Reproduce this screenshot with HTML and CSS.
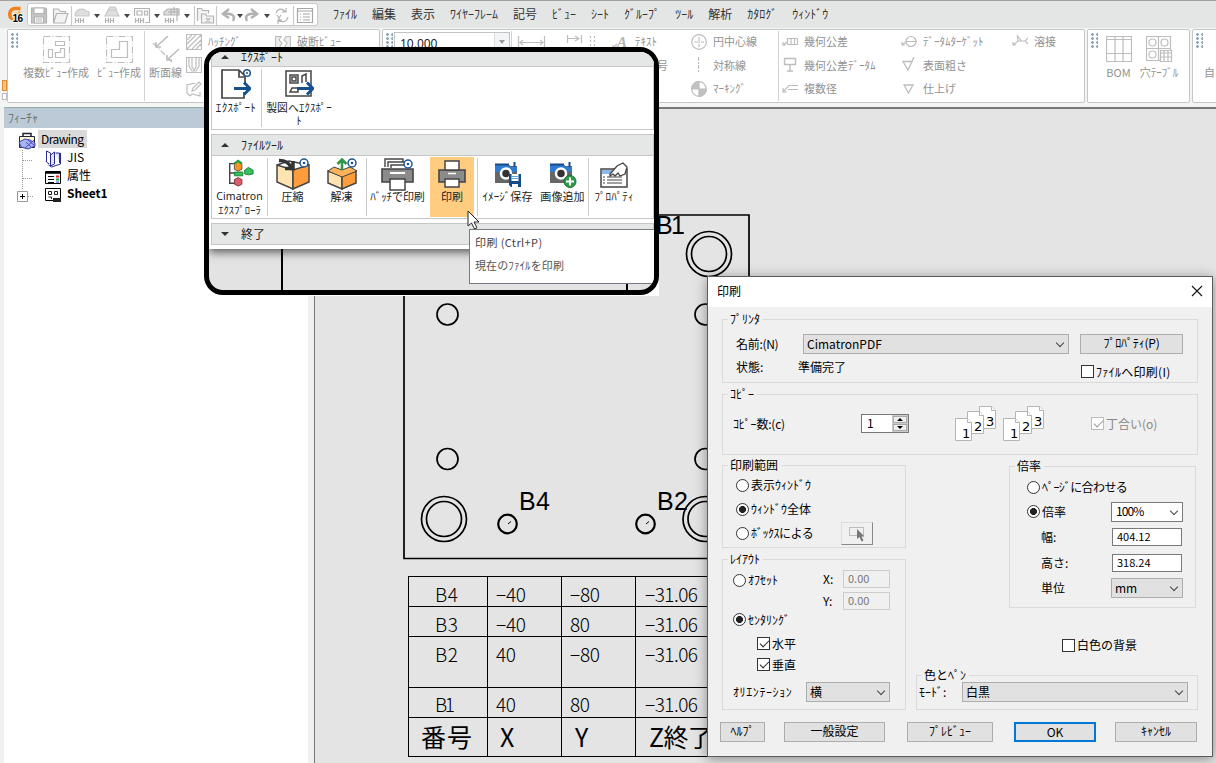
FILE: index.html
```html
<!DOCTYPE html>
<html lang="ja">
<head>
<meta charset="utf-8">
<title>Cimatron</title>
<link rel="stylesheet" href="styles.css">
</head>
<body>
<div class="app">
  <header class="menubar">
    <svg class="logo" width="19" height="20" viewBox="0 0 19 20"><path d="M14.500 3.500H9a5.500 5.500 0 0 0-2 10.500" fill="none" stroke="#f0821e" stroke-width="3.600"/><path d="M8 8.500h5.500V6" fill="none" stroke="#fbb040" stroke-width="2"/><text x="6.500" y="17" class="logo-num">16</text></svg>
    <div class="quick">
      <svg width="290" height="22" viewBox="28 4 290 22" fill="none" stroke="#b2b2b2" stroke-width="1.200">
        <path d="M31.500 8h14l1 1v14h-15z" fill="#c4c4c4"/><path d="M34 8v5.500h10V8zM34.500 23v-6h9v6z" fill="#fff"/><path d="M36 19h6m-6 2h6"/>
        <path d="M53.500 23V9h5l2 2.500h5v2M53.500 23l3-9.500h11.500l-3 9.500z" fill="#f2f2f2"/>
        <path d="M75 16c0-8 9-8 11-5l3 1v4zM105 16l3-6h8l3 6zM108 10l2-3h5l2 3" fill="#dedede" stroke="#c8c8c8"/>
        <path d="M75.500 18v5m3-5v5m-3-2.500h3m2-2.500v5m3-5v5m-3-2.500h3M105.500 18v5m3-5v5m-3-2.500h3m2-2.500v5m3-5v5m-3-2.500h3M135.500 18v5m3-5v5m-3-2.500h3m2-2.500v5m3-5v5m-3-2.500h3M165.500 18v5m3-5v5m-3-2.500h3m2-2.500v5m3-5v5m-3-2.500h3"/>
        <path d="M134.500 16V8.500h15v14h-4M137 11h5v4h-5zM144.500 11h3v4h-3z"/>
        <path d="M164 15v-3l4-3h11v6zM168 12h11M174 7v6M177 8v13M171 9v6" fill="#dedede"/>
        <path d="M197.500 21V8.500h4l1 2h6v3M201.500 23v-9h4l1 2h7v7zM206 18l4 4m0-4l-4 4" fill="#f3f3f3"/>
        <path d="M233 21c3-6-2-8-9-7m5-5-6 5 6 4M247 21c-3-6 2-8 9-7m-5-5 6 5-6 4" stroke-width="2.500"/>
        <path d="M276 13c2-5 7-5 9-1m1-4v4h-4M288 17c-1 5-6 6-9 3m-1 4v-4h4M277 15l2 3 2-3m-2 3v4" />
        <path d="M297.500 8.500h15v14h-15zM297.500 11h15M300 14h1m2 0h7m-10 3h1m2 0h7m-10 3h1m2 0h7" stroke="#a6a6a6"/>
        <path d="M71.500 6v19M194.500 6v19M216.500 6v19M293.500 6v19" stroke="#cacaca"/>
        <path d="M94 14h6l-3 4zM124 14h6l-3 4zM154 14h6l-3 4zM184 14h6l-3 4zM237 14h6l-3 4zM264 14h6l-3 4z" fill="#444" stroke="none"/>
      </svg>
    </div>
    <nav class="menus"><span>ﾌｧｲﾙ</span><span>編集</span><span>表示</span><span>ﾜｲﾔｰﾌﾚｰﾑ</span><span>記号</span><span>ﾋﾞｭｰ</span><span>ｼｰﾄ</span><span>ｸﾞﾙｰﾌﾟ</span><span>ﾂｰﾙ</span><span>解析</span><span>ｶﾀﾛｸﾞ</span><span>ｳｨﾝﾄﾞｳ</span></nav>
  </header>

  <section class="ribbon">
    <div class="ribbon-tabs"><i class="tab on"></i><i class="tab"></i></div>
    <div class="rpanel views">
      <i class="grip"></i>
      <div class="big w-multi"><svg width="27" height="27" viewBox="0 0 27 27" class="ln"><path d="M.5.500h26v26H.5z" stroke-dasharray="7 2 1 2"/><path d="M12.500 5.500h9v4h-9zM5.500 13.500h4v8h-4zM17.500 12.500h4v9h-9v-5h5z"/></svg><span>複数ﾋﾞｭｰ作成</span></div>
      <div class="big w-view"><svg width="27" height="27" viewBox="0 0 27 27" class="ln"><path d="M.5.500h26v26H.5z" stroke-dasharray="7 2 1 2"/><path d="M13.500 5.500h8v16h-16v-8h8z"/></svg><span>ﾋﾞｭｰ作成</span></div>
      <i class="vsep"></i>
      <div class="big w-section"><svg width="28" height="27" viewBox="0 0 28 27" class="ln"><path d="M1 7l19 19" stroke-dasharray="6 2 1 2"/><path d="M16 0L4 11m0-5v5h5M27 13L15 24m0-5v5h5" stroke-width="1.600"/></svg><span>断面線</span></div>
      <div class="cmds w-hatch">
        <div class="cmd"><svg width="16" height="16" viewBox="0 0 16 16" class="ln"><path d="M.5.500h15v15H.5zM1 6l5-5M1 10L10 1M1 15L15 1M6 15l9-9M10 15l5-5"/></svg><span>ﾊｯﾁﾝｸﾞ</span></div>
        <div class="cmd"><svg width="16" height="16" viewBox="0 0 16 16" class="ln"><path d="M.5.500h15v15H.5zM3 1v8l3 5h4l3-5V1M6 1v9l2 3 2-3V1"/></svg></div>
        <div class="cmd"><svg width="16" height="16" viewBox="0 0 16 16" class="ln"><path d="M9 2L1 4v8l3 3 2-2 8 2v-4M6 10l1-3 6-6 2 2-6 6z"/></svg></div>
      </div>
      <div class="cmds"><div class="cmd"><svg width="16" height="16" viewBox="0 0 16 16" class="ln"><path d="M.5 2.500H6L4 6l3 3-3 5.500H.5zM15.500 2.500H11L9 6l3 3-3 5.500h6.500z" fill="#eee"/></svg><span>破断ﾋﾞｭｰ</span></div></div>
    </div>

    <div class="rpanel notes">
      <i class="grip"></i>
      <div class="scale"><span>10.000</span><i class="dd"></i></div>
      <i class="vsep"></i>
      <div class="cmds w-dims"><div class="cmd"><svg width="80" height="18" viewBox="517 32 80 18" class="ln"><path d="M518.500 35v13M544.500 35v13M520 41.500h23M523 39l-3 2.500 3 2.500M540 39l3 2.500-3 2.500M567.500 34v8M568 37.500h10M575 35l4 2.500-4 2.500M581.500 34v8"/><path d="M590.500 35v14M594.500 35v14" stroke-dasharray="2 2"/></svg></div></div>
      <div class="cmds w-text">
        <div class="cmd"><svg width="18" height="16" viewBox="0 0 18 16" class="ln"><text x="5" y="13" class="glyph-a">A</text><path d="M5 10l-4 4m0-3v3h3"/></svg><span>ﾃｷｽﾄ</span></div>
        <div class="cmd tail"><span>記号</span></div>
      </div>
      <div class="cmds w-center">
        <div class="cmd"><svg width="16" height="16" viewBox="0 0 16 16" class="ln"><circle cx="8" cy="8" r="7.300"/><path d="M8 3v10M3 8h10" stroke-dasharray="4 1 1 1"/></svg><span>円中心線</span></div>
        <div class="cmd"><svg width="16" height="16" viewBox="0 0 16 16" class="ln"><path d="M7.500 0v16" stroke-dasharray="4 1 2 1"/></svg><span>対称線</span></div>
        <div class="cmd"><svg width="16" height="16" viewBox="0 0 16 16" class="ln"><circle cx="8" cy="8" r="7.300"/><path d="M8 8V.7A7.300 7.300 0 0 0 .7 8zM8 8v7.300A7.300 7.300 0 0 0 15.300 8z" fill="#c2c2c2"/></svg><span>ﾏｰｷﾝｸﾞ</span></div>
      </div>
      <i class="vsep"></i>
      <div class="cmds w-tol">
        <div class="cmd"><svg width="16" height="16" viewBox="0 0 16 16" class="ln"><path d="M5.500 4.500h10v6h-10zM9 5v5M12.500 5v5M5 8l-4 3m0-3v3h3"/></svg><span>幾何公差</span></div>
        <div class="cmd"><svg width="16" height="16" viewBox="0 0 16 16" class="ln"><path d="M2.500 1.500h11v6h-11zM8 8v6M5 14h6" stroke-width="1.400"/></svg><span>幾何公差ﾃﾞｰﾀﾑ</span></div>
        <div class="cmd"><svg width="16" height="16" viewBox="0 0 16 16" class="ln"><path d="M16 4.500H7L1 11m0-4v4h4M16 8.500H6"/></svg><span>複数径</span></div>
      </div>
      <div class="cmds w-surf">
        <div class="cmd"><svg width="16" height="16" viewBox="0 0 16 16" class="ln"><circle cx="10" cy="7.500" r="5"/><path d="M5 7.500h11M5 8l-4 3m0-3v3h3"/></svg><span>ﾃﾞｰﾀﾑﾀｰｹﾞｯﾄ</span></div>
        <div class="cmd"><svg width="16" height="16" viewBox="0 0 16 16" class="ln"><path d="M2 4.500h9L7 13zM7 13l6-13" stroke-width="1.300"/></svg><span>表面粗さ</span></div>
        <div class="cmd"><svg width="16" height="16" viewBox="0 0 16 16" class="ln"><path d="M3 4h9l-4.500 8z" stroke-width="1.300"/></svg><span>仕上げ</span></div>
      </div>
      <div class="cmds"><div class="cmd"><svg width="16" height="16" viewBox="0 0 16 16" class="ln"><path d="M1 11l5-4h7M6 7l-.5-5 4 5M16 4l-3 3 3 3M1 8v3h3"/></svg><span>溶接</span></div></div>
    </div>

    <div class="rpanel tables">
      <i class="grip"></i>
      <div class="big w-bom"><svg width="26" height="27" viewBox="0 0 26 27" class="ln"><path d="M.5.500h25v25H.5zM.5 3.500h25M9 1v25M17 1v25M1 17.500h25"/></svg><span>BOM</span></div>
      <div class="big w-hole"><svg width="27" height="27" viewBox="0 0 27 27" class="ln"><path d="M.5.500h24v24H.5zM12.500 1v24M1 12.500h24"/><circle cx="6.500" cy="6.500" r="3.500"/><circle cx="18.500" cy="6.500" r="3.500"/><circle cx="6.500" cy="18.500" r="3.500"/><path d="M14.500 14.500h11v11h-11zM14.500 17h11M18 15v11M22 15v11M15 21h11" fill="#fff"/></svg><span>穴ﾃｰﾌﾞﾙ</span></div>
    </div>
    <div class="rpanel auto"><i class="grip"></i><div class="big w-auto"><svg width="11" height="27"></svg><span>自</span></div></div>
  </section>

  <main class="work">
    <aside class="features">
      <h2>ﾌｨｰﾁｬ</h2>
      <div class="tree">
        <svg width="46" height="80" viewBox="15 130 46 80" class="tree-art">
          <path d="M22.500 149v40M23 159.500h10M23 177.500h10M28 195.500h6" fill="none" stroke="#999" stroke-dasharray="1 1"/>
          <path d="M17.500 190.500h10v10h-10z" fill="#fff" stroke="#999"/><path d="M20 195.500h5M22.500 193v5" stroke="#000"/>
          <path d="M19.500 135.500h15v11h-15z" fill="#fff9dc" stroke="#223"/><path d="M23 135v-2.500h8v2.500" fill="none" stroke="#223" stroke-width="1.500"/><path d="M19 141l6-3 5 1 5 3v3l-7 3-7-2z" fill="#a5b4f2" stroke="#3940a8"/><path d="M28 139l7 6m-9-4 6 6m2-8-9 8" stroke="#5a3fc0"/>
          <path d="M46.500 150l4 2v12l-4-3z" fill="#fff" stroke="#2a2a90"/><path d="M60.500 152v11l-9 3-3-2" fill="#fff" stroke="#2a2a90"/><path d="M50.500 154l4-3v12l-4 2zM55.500 152h4v10" fill="#dfe3fa" stroke="#2a2a90"/>
          <path d="M45.500 170.500h15v12h-15z" fill="#fff" stroke="#000"/><path d="M46 171.500h14" stroke="#000" stroke-width="2.500"/><path d="M48 175.500h6m-6 3h6m-6 3h6" stroke="#000"/><path d="M56 175.500h3" stroke="#e02020" stroke-width="2"/><path d="M56 178.500h3" stroke="#20a040" stroke-width="2"/><path d="M56 181h3" stroke="#2040d0"/>
          <path d="M45.500 187.500h15v12h-15z" fill="#fff" stroke="#000"/><path d="M48.500 190.500h3v3h-3zM54.500 190.500h3v3h-3zM48.500 196h3v2" fill="none" stroke="#222"/><path d="M53 197h8v4h-8z" fill="#222"/>
        </svg>
        <ul><li class="root"><span>Drawing</span></li><li>JIS</li><li>属性</li><li class="bold">Sheet1</li></ul>
      </div>
    </aside>
    <svg class="canvas" width="901" height="654" viewBox="315 109 901 654">
      <g class="draft">
        <path d="M404 215H749V558.500H404z"/>
        <circle cx="447.500" cy="314.500" r="10.500"/><circle cx="447.500" cy="459" r="10.500"/>
        <circle cx="705.500" cy="314.500" r="10.500"/><circle cx="705.500" cy="459" r="10.500"/>
        <circle cx="444" cy="519" r="22.500"/><circle cx="444" cy="519" r="17.500"/>
        <circle cx="705.500" cy="519" r="22.500"/><circle cx="705.500" cy="519" r="17.500"/>
        <circle cx="709" cy="254" r="22.500"/><circle cx="709" cy="254" r="17.500"/>
      </g>
      <g class="draft pins"><circle cx="507.500" cy="524" r="9.300"/><circle cx="645.500" cy="524" r="9.300"/></g>
      <path d="M508 524l3-2.500M646 524l3-2.500" stroke="#000"/>
      <g class="pin"><text x="519" y="510" textLength="31">B4</text><text x="657" y="510" textLength="31">B2</text><text x="656" y="234" textLength="29">B1</text></g>
      <path d="M408.500 576V757M487.500 576V757M561.500 576V757M635.500 576V757M408 576.500H1100M408 606.500H1100M408 636.500H1100M408 687.500H1100M408 717.500H1100M408 756.500H1100" stroke="#000"/>
      <g class="cells">
        <text x="435" y="601" textLength="23">B4</text><text x="496" y="601" textLength="30">−40</text><text x="570" y="601" textLength="30">−80</text><text x="645" y="601" textLength="53">−31.06</text>
        <text x="435" y="631" textLength="23">B3</text><text x="496" y="631" textLength="30">−40</text><text x="570" y="631" textLength="20">80</text><text x="645" y="631" textLength="53">−31.06</text>
        <text x="435" y="661" textLength="23">B2</text><text x="496" y="661" textLength="20">40</text><text x="570" y="661" textLength="30">−80</text><text x="645" y="661" textLength="53">−31.06</text>
        <text x="435" y="711" textLength="20">B1</text><text x="496" y="711" textLength="20">40</text><text x="570" y="711" textLength="20">80</text><text x="645" y="711" textLength="53">−31.06</text>
      </g>
      <g class="heads"><text x="421" y="747" textLength="51">番号</text><text x="500" y="747">X</text><text x="575" y="747">Y</text><text x="649" y="747" textLength="64">Z終了</text></g>
    </svg>
  </main>

  <div class="callout-back"></div>
  <div class="callout">
    <div class="filemenu">
      <h3 class="cut"><i class="up"></i>ｴｸｽﾎﾟｰﾄ</h3>
      <div class="tools first">
        <div class="tool t-exp"><svg width="30" height="30" viewBox="0 0 30 30"><path d="M18 1H1v28h22v-6M18 1l6 6v9M18 1v7h5" fill="none" stroke="#444" stroke-width="1.700"/><circle cx="26" cy="4" r="3.300" class="gear"/><circle cx="26" cy="4" r="1" fill="#1c5592"/><path d="M13 19.500h15M23 13.500l6 6-6 6" class="arrow"/></svg><span>ｴｸｽﾎﾟｰﾄ</span></div>
        <i class="tsep"></i>
        <div class="tool t-draft"><svg width="30" height="30" viewBox="0 0 30 30"><path d="M2 2h25v25H2zM6 6h8v8H6zM8 8h4v4H8zM18 14V7l4-2v8M6 23l2-4h6v4z" fill="none" stroke="#444" stroke-width="1.500"/><path d="M13 19.500h15M23 13.500l6 6-6 6" class="arrow"/></svg><span>製図へｴｸｽﾎﾟｰ</span><span>ﾄ</span></div>
      </div>
      <h3><i class="up"></i>ﾌｧｲﾙﾂｰﾙ</h3>
      <div class="tools">
        <div class="tool t-cima"><svg width="28" height="28" viewBox="2 1 30 30"><path d="M12 6H6v21h6M6 16h8" fill="none" stroke="#444" stroke-width="1.500"/><path d="M11 7l4-4 4 3v6l-4 2-4-2z" fill="#f7941d" stroke="#555"/><path d="M11 6l4-3 4 3" stroke="#22a045" stroke-width="2.500" fill="none"/><path d="M11 15h9v4h-9z" fill="#35c15a" stroke="#177c32"/><path d="M11 23l4-2 4 2v5l-4 2-4-2z" fill="#d95f6b" stroke="#7c3038"/><path d="M22 13l4-3 5 3v4l-5 1-4-1z" fill="#35c15a" stroke="#177c32"/></svg><span class="latin">Cimatron</span><span>ｴｸｽﾌﾟﾛｰﾗ</span></div>
        <i class="tsep"></i>
        <div class="tool t-box"><svg width="34" height="32" viewBox="0 0 34 32"><path d="M1 7l16 5v19L1 24z" class="boxl"/><path d="M33 7l-16 5v19l16-7z" class="boxr"/><path d="M1 7l12-4 20 4" fill="none" stroke="#444" stroke-width="1.500"/><path d="M3 2.500c7 0 10 2 12 7M9 10.500h8V3" stroke="#333" stroke-width="3.500" fill="none"/><circle cx="28" cy="5" r="4" class="gear"/><circle cx="28" cy="5" r="1.300" fill="#1c5592"/></svg><span>圧縮</span></div>
        <div class="tool t-box"><svg width="32" height="32" viewBox="0 0 32 32"><path d="M2 13l14 5v13L2 25z" class="boxl"/><path d="M30 13l-14 5v13l14-6z" class="boxr"/><path d="M2 13l6-4 8 3 8-3 7 4-15 6z" fill="#ffb45c" stroke="#444"/><path d="M16 12V2M11.500 6L16 1.500 20.500 6" fill="none" stroke="#31964b" stroke-width="2.600"/><circle cx="26" cy="5" r="4" class="gear"/><circle cx="26" cy="5" r="1.300" fill="#1c5592"/></svg><span>解凍</span></div>
        <i class="tsep"></i>
        <div class="tool t-batch"><svg width="33" height="33" viewBox="0 0 33 33"><path d="M4 9V1h18v3M7 9V4h18v3M10 10V7h17" fill="#fff" stroke="#444" stroke-width="1.400"/><path d="M1 11h31v13H1z" fill="#8b8b8b" stroke="#444" stroke-width="1.600"/><path d="M9 15h15" stroke="#fff" stroke-width="2"/><path d="M9 21h15v11H9z" fill="#fff" stroke="#444" stroke-width="1.500"/><circle cx="27" cy="6" r="4" class="gear"/><circle cx="27" cy="6" r="1.300" fill="#1c5592"/></svg><span>ﾊﾞｯﾁで印刷</span></div>
        <div class="tool t-print"><svg width="28" height="28" viewBox="0 0 28 28"><path d="M1 10h26v12H1z" fill="#8b8b8b" stroke="#444" stroke-width="1.600"/><path d="M7 1h14v9H7zM7 19h14v8H7z" fill="#fff" stroke="#444" stroke-width="1.500"/><path d="M10 13.500h8" stroke="#fff" stroke-width="1.500"/></svg><span>印刷</span></div>
        <i class="tsep"></i>
        <div class="tool t-save"><svg width="28" height="28" viewBox="0 0 28 28"><path d="M1 5h22v17H1z" fill="#666"/><path d="M1 4h15v2h7v5H1z" fill="#2d7bd2"/><path d="M20.500 1v5M1 3.500h14" stroke="#164d87" stroke-width="2"/><circle cx="12" cy="12.500" r="5" fill="#333" stroke="#fff" stroke-width="2.500"/><path d="M15 13h12v13H17l-2-2z" fill="#154b87"/><path d="M17.500 13h7v7h-7zM18 23h6v3h-6z" fill="#fff"/><path d="M18 15.500h6m-6 2h6" stroke="#58a5dc"/></svg><span>ｲﾒｰｼﾞ保存</span></div>
        <div class="tool t-add"><svg width="28" height="28" viewBox="0 0 28 28"><path d="M1 5h22v17H1z" fill="#666"/><path d="M1 4h15v2h7v5H1z" fill="#2d7bd2"/><path d="M20.500 1v5M1 3.500h14" stroke="#164d87" stroke-width="2"/><circle cx="12" cy="12.500" r="5" fill="#333" stroke="#fff" stroke-width="2.500"/><circle cx="21" cy="20.500" r="6" fill="#2f9a49" stroke="#187231"/><path d="M21 16.500v8M17 20.500h8" stroke="#fff" stroke-width="2"/></svg><span>画像追加</span></div>
        <i class="tsep"></i>
        <div class="tool t-prop"><svg width="28" height="28" viewBox="0 0 28 28"><path d="M1 8h26v18H1z" fill="#fff" stroke="#444" stroke-width="1.500"/><path d="M2 9h11v4H2z" fill="#8cb9e8"/><path d="M3 16h2m2 0h15M3 19h2m2 0h15M3 22h2m2 0h15" stroke="#444" stroke-width="1.200"/><path d="M10 13l7-8 6-3 4 4-2 7-5 2-2-3-3 3-2-2-3 2z" fill="#fff" stroke="#444" stroke-width="1.300"/></svg><span>ﾌﾟﾛﾊﾟﾃｨ</span></div>
      </div>
      <h3><i class="down"></i>終了</h3>
    </div>
    <svg class="under" width="445" height="41" viewBox="209 249 445 41"><path d="M282 249v41M627 283v7" stroke="#000" stroke-width="2"/></svg>
    <div class="tip"><strong>印刷 (Ctrl+P)</strong><p>現在のﾌｧｲﾙを印刷</p></div>
    <svg class="cursor" width="14" height="20" viewBox="0 0 14 20"><path d="M1 1v15l3.500-3 3 6 2.500-1.200-3-5.800h5z" fill="#fff" stroke="#222"/></svg>
  </div>

  <div class="dialog">
    <div class="titlebar"><span>印刷</span><svg width="12" height="12" viewBox="0 0 12 12"><path d="M1 1l10 10M11 1L1 11" stroke="#111" stroke-width="1.100"/></svg></div>
    <div class="body">
      <fieldset class="f-printer"><legend>ﾌﾟﾘﾝﾀ</legend>
        <div class="row name"><label>名前:(N)</label><div class="select gray">CimatronPDF<i></i></div><button>ﾌﾟﾛﾊﾟﾃｨ(P)</button></div>
        <div class="row state"><label>状態:</label><span>準備完了</span><div class="opt"><i class="box"></i>ﾌｧｲﾙへ印刷(I)</div></div>
      </fieldset>
      <fieldset class="f-copy"><legend>ｺﾋﾟｰ</legend>
        <div class="row"><label>ｺﾋﾟｰ数:(c)</label><div class="spin"><span>1</span><i class="steps"><b class="su"></b><b class="sd"></b></i></div>
        <svg class="pages" width="92" height="38" viewBox="0 0 92 38">
          <g fill="#fff" stroke="#b4b4b4"><path d="M25.500 1.500h12l4 4v18h-16zM73.500 1.500h12l4 4v18h-16z"/><path d="M37.500 1.500v4h4M85.500 1.500v4h4"/><path d="M13.500 6.500h12l4 4v18h-16zM61.500 6.500h12l4 4v18h-16z"/><path d="M25.500 6.500v4h4M73.500 6.500v4h4"/><path d="M1.500 13.500h12l4 4v18h-16zM49.500 13.500h12l4 4v18h-16z"/><path d="M13.500 13.500v4h4M61.500 13.500v4h4"/></g>
          <g class="pnum"><text x="8" y="33">1</text><text x="20" y="26">2</text><text x="32" y="21">3</text><text x="56" y="33">1</text><text x="68" y="26">2</text><text x="80" y="21">3</text></g>
        </svg>
        <div class="opt off"><i class="box on"></i>丁合い(o)</div></div>
      </fieldset>
      <div class="cols">
        <div class="left">
          <fieldset class="f-range"><legend>印刷範囲</legend>
            <div class="opt"><i class="radio"></i>表示ｳｨﾝﾄﾞｳ</div>
            <div class="opt"><i class="radio on"></i>ｳｨﾝﾄﾞｳ全体</div>
            <div class="opt"><i class="radio"></i><span class="boxby">ﾎﾞｯｸｽによる</span><span class="pick"><svg width="18" height="17" viewBox="0 0 18 17"><path d="M1.500 2.500h14v8h-14z" fill="none" stroke="#888" stroke-dasharray="1 1"/><path d="M9 4v10l2.500-2 2 4.500 2-1-2-4h3z" fill="#777"/></svg></span></div>
          </fieldset>
          <fieldset class="f-layout"><legend>ﾚｲｱｳﾄ</legend>
            <div class="row off-x"><div class="opt"><i class="radio"></i>ｵﾌｾｯﾄ</div><label>X:</label><span class="field dis">0.00</span></div>
            <div class="row off-y"><label>Y:</label><span class="field dis">0.00</span></div>
            <div class="opt centering"><i class="radio on"></i>ｾﾝﾀﾘﾝｸﾞ</div>
            <div class="opt sub"><i class="box on"></i>水平</div>
            <div class="opt sub"><i class="box on"></i>垂直</div>
            <div class="row orient"><label>ｵﾘｴﾝﾃｰｼｮﾝ</label><div class="select gray">横<i></i></div></div>
          </fieldset>
        </div>
        <div class="right">
          <fieldset class="f-scale"><legend>倍率</legend>
            <div class="opt fit"><i class="radio"></i>ﾍﾟｰｼﾞに合わせる</div>
            <div class="row"><div class="opt"><i class="radio on"></i>倍率</div><div class="select"><span class="narrow">100%</span><i></i></div></div>
            <div class="row"><label>幅:</label><span class="field">404.12</span></div>
            <div class="row"><label>高さ:</label><span class="field">318.24</span></div>
            <div class="row"><label>単位</label><div class="select gray">mm<i></i></div></div>
          </fieldset>
          <div class="opt white"><i class="box"></i>白色の背景</div>
          <fieldset class="f-pen"><legend>色とﾍﾟﾝ</legend>
            <div class="row"><label>ﾓｰﾄﾞ:</label><div class="select gray">白黒<i></i></div></div>
          </fieldset>
        </div>
      </div>
      <div class="buttons"><button class="b-help">ﾍﾙﾌﾟ</button><button class="b-gen">一般設定</button><button class="b-prev">ﾌﾟﾚﾋﾞｭｰ</button><button class="b-ok">OK</button><button class="b-cancel">ｷｬﾝｾﾙ</button></div>
    </div>
  </div>
</div>
</body>
</html>
```

FILE: styles.css
```css
* { box-sizing: border-box; }
body { margin: 0; width: 1216px; height: 763px; overflow: hidden; font: 12px/14px "Noto Sans CJK JP", sans-serif; color: #000; }
i { display: block; flex: none; font-style: normal; }
svg { display: block; flex: none; }
h2, h3, p, ul { margin: 0; padding: 0; font-weight: 400; font-size: 12px; list-style: none; }
.app { position: relative; width: 1216px; height: 763px; display: flex; flex-direction: column; background: #f0f0f0; overflow: hidden; white-space: nowrap; }

/* menu bar */
.menubar { height: 28px; flex: none; display: flex; align-items: center; background: #e4e6e6; border-top: 1px solid #a0a0a0; padding-left: 6px; }
.logo { width: 19px; margin-right: 2px; }
.logo-num { font: bold 10px "Liberation Sans", sans-serif; letter-spacing: -.5px; stroke: #fff; stroke-width: 1.500px; paint-order: stroke; }
.quick { width: 291px; height: 23px; border: 1px solid #c9c9c9; border-radius: 3px; background: #fff; margin-right: 15px; overflow: hidden; }
.menus { display: flex; gap: 15px; color: #333; margin-top: -1px; }

/* ribbon */
.ribbon { height: 79px; flex: none; display: flex; background: #f3f4f4; }
.ribbon-tabs { width: 8px; padding: 52px 0 0 2px; }
.tab { width: 5px; height: 7px; border: 1px solid #bbb; background: #fff; margin-top: 2px; }
.tab.on { height: 11px; border-color: #e08a35; background: #ffc27c; margin-top: 0; }
.rpanel { height: 74px; margin-top: 1px; border: 1px solid #c6c6c6; border-radius: 2px; background: #fff; display: flex; flex: none; color: #929292; font-size: 11px; line-height: 13px; overflow: hidden; }
.views { width: 373px; margin-right: 2px; }
.notes { width: 703px; margin-right: 2px; }
.tables { width: 103px; margin-right: 2px; }
.auto { width: 80px; }
.grip { width: 7px; height: 15px; margin: 3px 0 0 3px; background: radial-gradient(circle at 1.500px 1.500px, #8da9b7 1.300px, transparent 1.500px) 0 0 / 5px 4px; }
.ln { fill: none; stroke: #bdbdbd; stroke-width: 1.200; }
.big { display: flex; flex-direction: column; align-items: center; padding-top: 6px; gap: 3px; flex: none; }
.w-multi { width: 76px; }
.w-view { width: 48px; margin-left: 1px; }
.vsep + .w-section { width: 41px; }
.views .vsep { margin-left: 1px; }
.w-bom { width: 35px; margin-left: 3px; }
.w-hole { width: 46px; }
.w-auto { margin-left: 1px; }
.vsep { width: 1px; height: 70px; background: #d2d2d2; margin-top: 1px; }
.cmd { height: 23.500px; display: flex; align-items: center; gap: 6px; }
.w-hatch { width: 89px; }
.scale { width: 116px; height: 22px; margin: 2px 1px 0 1px; border: 1px solid #c4c4c4; color: #111; display: flex; justify-content: space-between; padding-left: 5px; font: 12px/22px "Open Sans", sans-serif; }
.dd { width: 15px; background: #f3f4f6; border-left: 1px solid #ddd; padding: 7px 4px; }
.dd::before { content: ""; display: block; border: 3px solid transparent; border-top: 4px solid #999; }
.w-dims { width: 100px; padding-left: 5px; }
.w-text { width: 79px; }
.w-text .cmd { gap: 5px; }
.w-text .tail { padding-left: 34px; }
.glyph-a { font: italic bold 15px "Liberation Serif", serif; fill: #b5b5b5; stroke: none; }
.w-center { width: 87px; }
.w-tol { width: 122px; padding-left: 3px; }
.w-surf { width: 111px; }

/* workspace */
.work { flex: 1; display: flex; padding-left: 4px; min-height: 0; }
.features { width: 304px; background: #fff; margin-right: 6px; border-top: 1px solid #9aa; }
.features h2 { height: 20px; padding: 3px 4px; background: #bccad8; color: #6c7276; }
.tree { display: flex; padding: 3px 0 0 11px; }
.tree ul { font: 12px/18px "Noto Sans CJK JP", sans-serif; margin-top: -1px; }
.tree li { height: 18px; padding-left: 6px; }
.tree .root { margin-left: -23px; padding: 0; }
.root span { display: inline-block; background: #d9d9d9; padding: 0 3px; letter-spacing: -.55px; }
.tree .bold { font-weight: 700; letter-spacing: -.1px; }
.canvas { background: #e4e4e4; border-top: 2px solid #777; border-left: 1px solid #777; width: 902px; height: 656px; }
.draft { fill: none; stroke: #000; stroke-width: 1.700; }
.pins { stroke-width: 2.200; }
.pin { font: 25px "Liberation Sans", sans-serif; }
.cells { font: 300 19px "Noto Sans CJK JP", sans-serif; transform: translateY(1px); }
.heads { font: 25px "Noto Sans CJK JP", sans-serif; }

/* file menu callout */
.callout-back { position: absolute; left: 204px; top: 275px; width: 455px; height: 21px; background: #fff; }
.callout { position: absolute; left: 204px; top: 47px; width: 455px; height: 248px; border: 5px solid #000; border-radius: 19px; background: #e3e3e3; overflow: hidden; }
.filemenu { height: 197px; background: #fff; padding-left: 2px; box-shadow: 0 3px 9px #555; }
.filemenu h3 { height: 22px; margin-top: 4px; border: 1px solid #c6c6c6; background: #e5e7e7; padding-left: 9px; display: flex; align-items: center; gap: 12px; color: #222; }
.filemenu h3.cut { height: 15px; margin: 0; padding-bottom: 4px; border-top: 0; }
.up, .down { width: 8px; border: 4px solid transparent; border-top: 0; border-bottom-color: #333; }
.down { border-bottom: 0; border-top: 4px solid #333; }
.tools { height: 63px; border: 1px solid #c6c6c6; border-top: 0; display: flex; font-size: 11px; line-height: 13px; color: #222; }
.tool { display: flex; flex-direction: column; align-items: center; flex: none; padding-top: 2px; text-align: center; }
.tool span { letter-spacing: .1px; }
.tsep { width: 1px; margin: 2px 0; background: #ccc; }
.t-exp { width: 49px; padding-right: 1px; }
.tool.t-exp span { letter-spacing: .3px; }
.t-draft { width: 74px; }
.tool.t-draft span { font-size: 10.800px; }
.t-exp svg, .t-draft svg { margin-bottom: 2px; }
.t-cima { width: 55px; }
.t-cima svg { margin: 1px 0 3px; }
.tool.t-cima span { font-size: 10.500px; }
.t-box { width: 49px; }
.tool.t-box svg { height: 32px; }
.t-batch { width: 61px; }
.tool.t-batch svg { margin-bottom: -1px; }
.tool.t-batch span { letter-spacing: -.1px; }
.t-print { width: 44px; margin: 1px 3px 1px 2px; background: #ffcc80; padding-top: 3px; }
.t-print svg { margin-bottom: 2px; }
.t-save { width: 59px; }
.t-add { width: 51px; }
.t-prop { width: 48px; padding-left: 2px; }
.t-save svg, .t-add svg, .t-prop svg { margin: 3px 0 1px; }
.latin { font-family: "Noto Sans", sans-serif; }
.gear { fill: #fff; stroke: #1c5592; stroke-width: 1.500; }
.arrow { fill: none; stroke: #17508e; stroke-width: 3; }
.boxl { fill: #ffe4b1; stroke: #444; stroke-width: 1.500; }
.boxr { fill: #ff9d3d; stroke: #444; stroke-width: 1.500; }
.tip { position: absolute; left: 260px; top: 177px; width: 200px; height: 55px; background: #fff; border: 1px solid #767b84; padding: 5px; color: #555; font-size: 11px; }
.tip strong { font-weight: 400; display: block; color: #444; letter-spacing: .4px; }
.tip p { margin-top: 9px; font-size: 11px; letter-spacing: .1px; }
.cursor { position: absolute; left: 258px; top: 158px; }

/* print dialog */
.dialog { position: absolute; left: 707px; top: 276px; width: 506px; height: 481px; border: 1px solid #5c5c5c; background: #f0f0f0; box-shadow: 0 2px 12px rgba(0,0,0,.4); }
.titlebar { height: 30px; background: #fff; display: flex; align-items: center; justify-content: space-between; padding: 0 9px 2px; }
.body { padding: 6px 14px 0; }
fieldset { margin: 0; border: 1px solid #dadada; padding: 0; min-width: 0; }
legend { height: 13px; line-height: 12px; padding: 0 3px 0 2px; margin-left: 5px; }
.row, .opt { display: flex; align-items: center; }
.opt { line-height: 12px; }
label { display: block; flex: none; }
button { font: 12px/14px "Noto Sans CJK JP", sans-serif; height: 20px; padding: 0 0 2px; border: 1px solid #adadad; background: #e1e1e1; flex: none; color: #000; }
.select { height: 20px; border: 1px solid #7a7a7a; background: #fff; display: flex; align-items: center; justify-content: space-between; padding: 0 5px 0 4px; flex: none; }
.select.gray { background: #e1e1e1; border-color: #adadad; padding-left: 3px; }
.select i { width: 6px; height: 6px; border: solid #444; border-width: 0 1px 1px 0; transform: translateY(-1px) rotate(45deg); }
.narrow { letter-spacing: -.9px; margin-top: -2px; }
.field { height: 18px; width: 70px; border: 1px solid #7a7a7a; background: #fff; padding: 0 4px; line-height: 15px; font-size: 11px; }
.field.dis { width: 47px; border: 1px solid #ccc; background: #f0f0f0; color: #777; }
.radio { width: 13px; height: 13px; border: 1px solid #333; border-radius: 50%; background: #fff; margin-right: 2px; }
.radio.on { background: radial-gradient(circle, #222 0 3.200px, #fff 3.800px); }
.box { width: 13px; height: 13px; border: 1px solid #333; background: #fff; margin-right: 2px; }
.box.on::before { content: ""; display: block; width: 8px; height: 4px; margin: 2px 0 0 2px; border: solid #222; border-width: 0 0 1.300px 1.300px; transform: rotate(-45deg); }
.off { color: #888; }
.off .box { border-color: #bbb; }
.off .box.on::before { border-color: #999; }

.f-printer { width: 476px; height: 70px; }
.name { padding: 8px 0 0 13px; }
.name label { width: 67px; letter-spacing: -.3px; }
.name .select { width: 266px; margin-right: 11px; }
.name button { width: 103px; letter-spacing: -.2px; }
.state { padding-left: 13px; height: 28px; align-items: flex-start; padding-top: 6px; }
.state label { width: 62px; }
.state .opt { margin: 5px 0 0 235px; letter-spacing: .3px; }
.f-copy { width: 476px; height: 67px; margin-top: 5px; }
.f-copy .row { height: 45px; padding-left: 10px; }
.f-copy label { width: 128px; letter-spacing: -.2px; }
.spin { width: 48px; height: 19px; border: 1px solid #777; background: #fff; display: flex; justify-content: space-between; padding-left: 5px; }
.spin span { line-height: 15px; }
.steps { width: 16px; background: #ccc; display: grid; gap: 1px; padding: 1px; }
.steps b { background: #f0f0f0; border: 1px solid #aaa; display: grid; place-content: center; }
.steps b::before { content: ""; border: 3px solid transparent; border-top: 0; border-bottom: 3px solid #000; }
.steps .sd::before { border-bottom: 0; border-top: 3px solid #000; }
.pages { margin: 0 45px; }
.pnum { font: 13px "DejaVu Sans", sans-serif; }
.cols { display: flex; gap: 10px; margin-top: 4px; height: 251px; }
.left { width: 184px; }
.right { width: 282px; padding-top: 1px; }
.f-range { height: 89px; padding-top: 1px; }
.f-range .opt { height: 24px; padding-left: 13px; }
.boxby { width: 90px; letter-spacing: -.5px; }
.pick { width: 32px; height: 23px; border: 1px solid #aaa; border-color: #ddd #888 #888 #ddd; display: grid; place-content: center; }
.f-layout { height: 157px; margin-top: 5px; }
.f-layout .row, .f-layout > .opt { padding-left: 10px; }
.off-x { height: 22px; margin-top: 2px; }
.off-y { height: 22px; }
.off-x .opt { width: 90px; padding-top: 2px; }
.off-x label, .off-y label { width: 20px; }
.f-layout .off-y { padding-left: 100px; }
.centering { height: 15px; }
.f-layout > .sub { height: 21px; padding-left: 34px; }
.centering + .sub { margin-top: 6px; }
.orient { margin-top: 7px; }
.orient label { width: 73px; letter-spacing: .6px; }
.orient .select { width: 84px; }
.f-scale { margin-left: 93px; width: 187px; height: 148px; }
.f-scale .opt { padding-left: 17px; height: 24px; }
.fit { margin-top: 2px; letter-spacing: -.6px; }
.f-scale .row { height: 25.500px; }
.f-scale .row label { width: 102px; padding-left: 31px; }
.f-scale .row .opt { width: 101px; }
.f-scale .row .select { width: 72px; }
.f-scale label + .select { margin-left: -1px; }
.white { margin: 30px 0 0 146px; height: 14px; }
.f-pen { width: 282px; height: 41px; margin-top: 17px; }
.f-pen .row { padding-left: 2px; }
.f-pen label { width: 43px; }
.f-pen .select { width: 226px; }
.buttons { display: flex; padding-top: 12px; margin-left: -2px; }
.b-help { width: 45px; margin-right: 19px; }
.b-gen { width: 101px; margin-right: 22px; }
.b-prev { width: 86px; margin-right: 21px; }
.b-ok { width: 82px; margin-right: 19px; border: 2px solid #0078d7; padding-bottom: 1px; }
.b-cancel { width: 82px; }
```
